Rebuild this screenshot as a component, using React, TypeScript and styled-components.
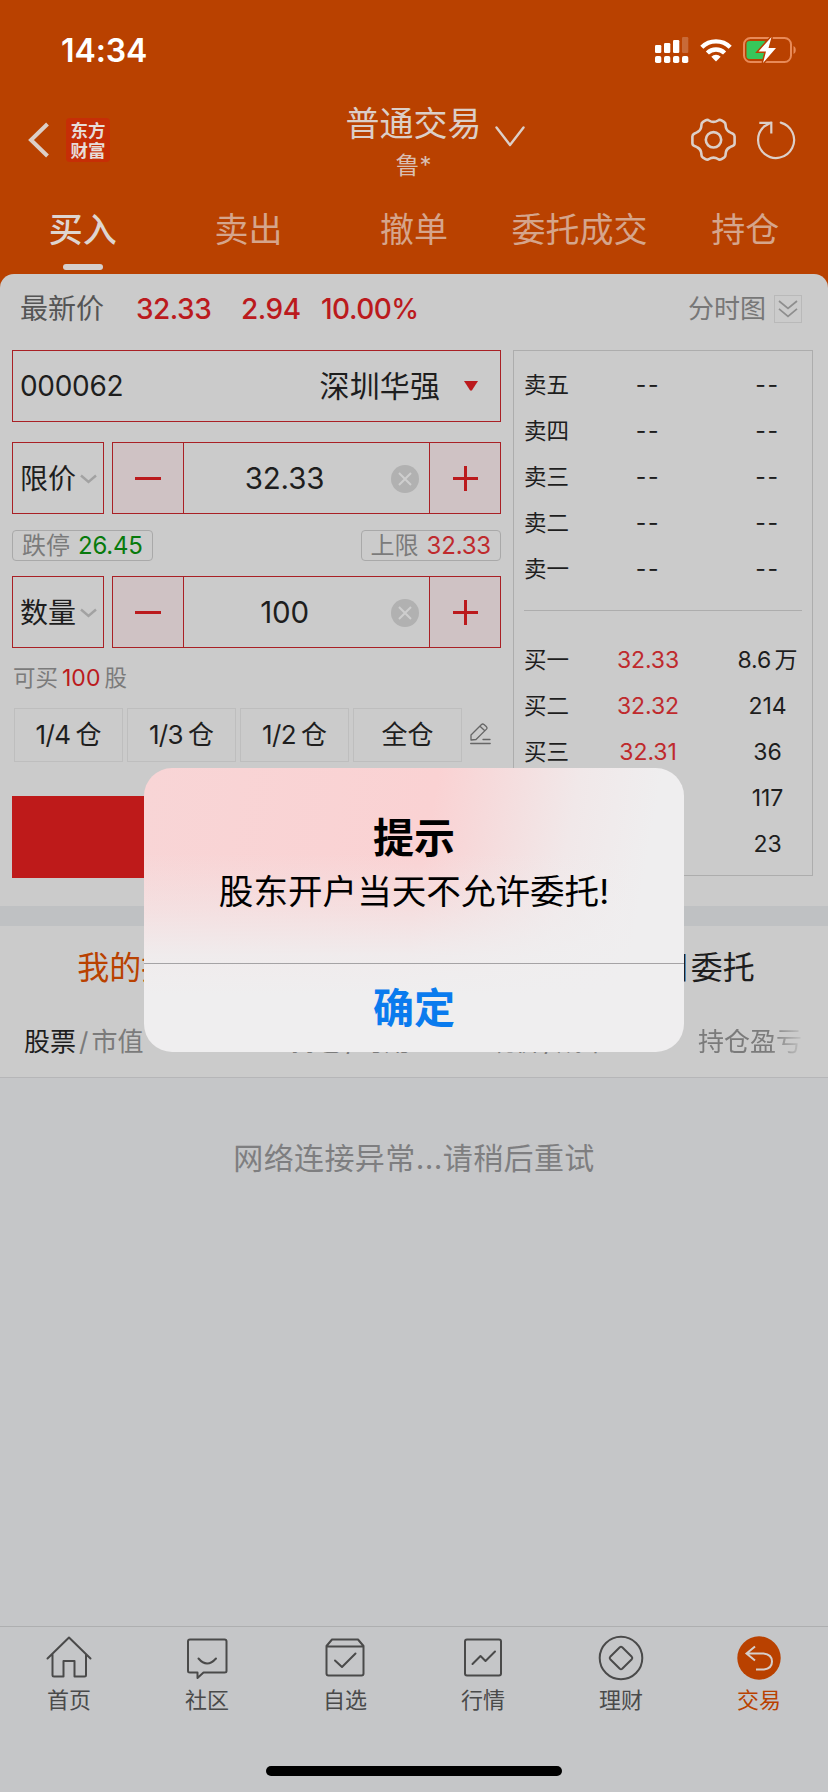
import React from "react";
import styled, { createGlobalStyle, css } from "styled-components";

const c = {
  brand: "#b94100",
  sheet: "#cbcbcb",
  page: "#c5c6c8",
  red: "#bb1a1d",
  redLine: "#a92025",
  ink: "#1e1e1e",
  mid: "#4a4a4a",
  gray: "#7b7b7b",
  line: "#adadad",
};

const Global = createGlobalStyle`
  * { box-sizing: border-box; }
  body {
    margin: 0;
    font-family: Inter, "Noto Sans CJK SC", sans-serif;
    color: ${c.ink};
    background: ${c.page};
  }
`;

const Screen = styled.div`
  position: relative;
  width: 828px;
  height: 1792px;
  display: flex;
  flex-direction: column;
  overflow: hidden;
  background: ${c.page};
  white-space: nowrap;
  line-height: 1;
`;

/* ---------- header ---------- */
const Header = styled.header`
  height: 290px;
  margin-bottom: -16px;
  flex: none;
  background: ${c.brand};
  color: #dccfc8;
`;
const StatusBar = styled.div`
  height: 98px;
  padding: 0 31px 0 61px;
  display: flex;
  align-items: center;
  justify-content: space-between;
`;
const Clock = styled.span`
  color: #fff;
  font-size: 32px;
  font-weight: 600;
  letter-spacing: -0.1px;
  padding-top: 3px;
`;
const StatusIcons = styled.div`
  display: flex;
  align-items: center;
  gap: 11px;
  padding-top: 2px;
`;
const NavBar = styled.div`
  height: 90px;
  padding: 0 32px 0 28px;
  display: grid;
  grid-template-columns: 317px 1fr auto;
  align-items: center;
`;
const NavLeft = styled.div`
  display: flex;
  align-items: center;
  gap: 16px;
  padding-bottom: 6px;
`;
const Brand = styled.div`
  width: 44px;
  height: 44px;
  display: grid;
  place-content: center;
  background: #c62e06;
  color: #e6dcd8;
  font-size: 17.5px;
  line-height: 20px;
  font-weight: 700;
  font-family: "Noto Sans CJK SC", sans-serif;
  border-radius: 4px;
`;
const TitleRow = styled.div`
  display: flex;
  align-items: flex-start;
  gap: 13px;
`;
const TitleText = styled.div`
  width: 137px;
  display: flex;
  flex-direction: column;
  align-items: center;
  font-size: 34px;
  line-height: 46px;
`;
const Account = styled.span`
  font-size: 24px;
  line-height: 38px;
  color: #d9bfb2;
`;
const ChevronHolder = styled.div`
  padding-top: 25px;
`;
const NavActions = styled.div`
  display: flex;
  align-items: center;
  gap: 19px;
  padding-bottom: 6px;
`;
const Tabs = styled.nav`
  display: grid;
  grid-template-columns: repeat(5, 1fr);
  height: 86px;
  padding-top: 18px;
`;
const Tab = styled.div<{ $on?: boolean }>`
  display: flex;
  flex-direction: column;
  align-items: center;
  font-size: 34px;
  line-height: 48px;
  font-weight: ${(p) => (p.$on ? 500 : 400)};
  color: ${(p) => (p.$on ? "#ded5d0" : "#d5a58c")};
  ${(p) =>
    p.$on &&
    css`
      &::after {
        content: "";
        width: 40px;
        height: 6px;
        margin-top: 10px;
        border-radius: 3px;
        background: #d6cfcc;
      }
    `}
`;

/* ---------- trade sheet ---------- */
const Sheet = styled.section`
  position: relative;
  flex: none;
  height: 632px;
  background: ${c.sheet};
  border-radius: 14px 14px 0 0;
`;
const QuoteRow = styled.div`
  height: 76px;
  padding: 0 26px 6px 20px;
  display: flex;
  align-items: center;
  font-size: 28px;
`;
const QuoteLabel = styled.span`
  width: 116px;
  color: #555;
`;
const QuoteValue = styled.span<{ $w: number }>`
  width: ${(p) => p.$w}px;
  color: ${c.red};
  font-weight: 500;
  letter-spacing: -0.5px;
`;
const ChartToggle = styled.div`
  margin-left: auto;
  display: flex;
  align-items: center;
  gap: 8px;
  font-size: 26px;
  color: #777;
`;
const ToggleBox = styled.div`
  width: 28px;
  height: 28px;
  display: grid;
  place-items: center;
  border: 1px solid #b9b9b9;
`;
const TradeGrid = styled.div`
  display: grid;
  grid-template-columns: 489px 300px;
  column-gap: 12px;
  padding-left: 12px;
`;
const Form = styled.div`
  display: flex;
  flex-direction: column;
`;
const StockBox = styled.div`
  height: 72px;
  margin-bottom: 20px;
  padding: 0 22px 0 7px;
  border: 1px solid ${c.redLine};
  display: flex;
  align-items: center;
  font-size: 28px;
  letter-spacing: -0.3px;
`;
const StockName = styled.span`
  margin-left: auto;
  margin-right: 24px;
  font-size: 30px;
  letter-spacing: 0.1px;
`;
const FieldRow = styled.div`
  display: flex;
  gap: 8px;
  height: 72px;
`;
const FieldKind = styled.div`
  width: 92px;
  padding-left: 7px;
  padding-top: 1px;
  border: 1px solid ${c.redLine};
  display: flex;
  align-items: center;
  gap: 4px;
  font-size: 28px;
`;
const Stepper = styled.div`
  width: 389px;
  border: 1px solid ${c.redLine};
  display: grid;
  grid-template-columns: 71px 1fr 71px;
`;
const StepButton = styled.div<{ $side: "left" | "right" }>`
  display: grid;
  place-items: center;
  background: #cfc2c4;
  border-${(p) => (p.$side === "left" ? "right" : "left")}: 1px solid ${c.redLine};
`;
const StepValue = styled.div`
  display: grid;
  grid-template-columns: 1fr 28px;
  align-items: center;
  padding: 1px 10px 0 0;
  column-gap: 6px;
  font-size: 29.5px;
  letter-spacing: -0.2px;
  text-align: center;
`;
const LimitRow = styled.div`
  height: 62px;
  display: flex;
  align-items: center;
  justify-content: space-between;
`;
const LimitTag = styled.div<{ $color: string }>`
  height: 31px;
  padding: 1px 9px 0;
  display: flex;
  align-items: center;
  gap: 8px;
  border: 1px solid #a9a9a9;
  border-radius: 4px;
  font-size: 24px;
  color: ${c.gray};
  b {
    font-weight: 400;
    letter-spacing: -0.2px;
    color: ${(p) => p.$color};
  }
`;
const Available = styled.div`
  height: 60px;
  display: flex;
  align-items: center;
  gap: 4px;
  padding-left: 1px;
  font-size: 22.5px;
  color: ${c.gray};
  b {
    font-weight: 400;
    color: ${c.red};
    font-size: 23px;
  }
`;
const QuickRow = styled.div`
  display: flex;
  align-items: center;
  gap: 4px;
  padding-left: 2px;
  height: 54px;
`;
const Quick = styled.div`
  width: 109px;
  height: 54px;
  display: flex;
  align-items: center;
  justify-content: center;
  gap: 5px;
  border: 1px solid #bebebe;
  font-size: 26px;
`;
const Fraction = styled.span`
  letter-spacing: -0.6px;
`;
const EditHolder = styled.div`
  padding-left: 4px;
  height: 24px;
`;
const BuyButton = styled.div`
  height: 82px;
  margin-top: 34px;
  background: #be1a1a;
`;
const Book = styled.div`
  height: 526px;
  border: 1px solid ${c.line};
  padding: 11px 10px 0;
`;
const BookRow = styled.div<{ $up?: boolean; $empty?: boolean }>`
  height: 46px;
  display: grid;
  grid-template-columns: 79px 90px 1fr;
  align-items: center;
  font-size: 23px;
  text-align: center;
  letter-spacing: ${(p) => (p.$empty ? "1.600px" : "-0.1px")};
  word-spacing: -3px;
  span:first-child {
    text-align: left;
    font-size: 22.5px;
    letter-spacing: 0;
  }
  span:nth-child(2) {
    color: ${(p) => (p.$up ? "#bf2a2d" : c.ink)};
  }
  span:last-child {
    padding-left: 31px;
    margin-right: -9px;
  }
`;
const BookDivider = styled.div`
  height: 1px;
  margin: 18px 0 26px;
  background: ${c.line};
`;

/* ---------- holdings ---------- */
const Band = styled.div`
  height: 20px;
  flex: none;
  background: #bfc1c3;
`;
const Holdings = styled.section`
  flex: none;
  height: 152px;
  background: ${c.sheet};
  border-bottom: 1px solid #b6b6b8;
`;
const HoldingTabs = styled.div`
  height: 84px;
  padding-left: 4px;
  display: grid;
  grid-template-columns: repeat(3, 1fr);
  align-items: center;
  text-align: center;
  font-size: 32px;
`;
const HoldingTab = styled.span<{ $on?: boolean }>`
  color: ${(p) => (p.$on ? c.brand : c.ink)};
`;
const Columns = styled.div`
  height: 62px;
  padding: 2px 24px 0;
  display: grid;
  grid-template-columns: 267px 198px 209px 1fr;
  align-items: center;
  font-size: 26px;
  color: ${c.gray};
  overflow: hidden;
  em {
    font-style: normal;
    color: ${c.ink};
  }
  i {
    font-style: normal;
    padding: 0 3px;
  }
`;
const FadeCell = styled.span`
  -webkit-mask-image: linear-gradient(90deg, #000 72px, transparent 108px);
  mask-image: linear-gradient(90deg, #000 72px, transparent 108px);
`;
const Empty = styled.div`
  flex: 1;
  padding-top: 65px;
  text-align: center;
  font-size: 30px;
  letter-spacing: 0.4px;
  line-height: 30px;
  color: #7e7e80;
`;

/* ---------- bottom bar ---------- */
const BottomBar = styled.footer`
  flex: none;
  height: 166px;
  border-top: 1px solid #aeafb0;
  display: flex;
  flex-direction: column;
  align-items: center;
`;
const BottomItems = styled.div`
  width: 828px;
  height: 139px;
  display: grid;
  grid-template-columns: repeat(6, 1fr);
`;
const BottomItem = styled.div<{ $on?: boolean }>`
  padding-top: 8px;
  display: flex;
  flex-direction: column;
  align-items: center;
  font-size: 22px;
  line-height: 30px;
  gap: 4px;
  color: ${(p) => (p.$on ? c.brand : c.mid)};
`;
const HomeIndicator = styled.div`
  width: 296px;
  height: 10px;
  border-radius: 5px;
  background: #000;
`;

/* ---------- alert ---------- */
const Alert = styled.div`
  position: absolute;
  left: 144px;
  top: 768px;
  width: 540px;
  height: 284px;
  border-radius: 28px;
  overflow: hidden;
  display: flex;
  flex-direction: column;
  color: #000;
  text-align: center;
  background: linear-gradient(180deg, rgba(239, 238, 239, 0) 30%, rgba(239, 238, 239, 0.45) 50%, rgba(239, 238, 239, 0.9) 66%, #efeeef 80%),
    linear-gradient(100deg, #f8d5d6 0%, #fad2d3 50%, #f6dadb 59%, #f1e8e9 74%, #efeeef 88%);
`;
const AlertBody = styled.div`
  flex: none;
  height: 195px;
  padding-top: 42px;
`;
const AlertTitle = styled.div`
  font-size: 41px;
  line-height: 57px;
  font-weight: 700;
`;
const AlertMessage = styled.div`
  font-size: 34.6px;
  line-height: 48px;
`;
const AlertAction = styled.div`
  flex: none;
  height: 89px;
  border-top: 1px solid #a5a3a5;
  font-size: 41px;
  line-height: 89px;
  font-weight: 700;
  color: #0a7bee;
`;

const stroke = { fill: "none", stroke: "currentColor", strokeLinecap: "round", strokeLinejoin: "round" } as const;

const Signal = () => (
  <svg width="34" height="27" viewBox="0 0 34 27" fill="#fff">
    <rect x="0" y="8" width="6.3" height="8" rx="1.2" />
    <rect x="9" y="6" width="6.3" height="10" rx="1.2" />
    <rect x="18" y="3" width="6.3" height="13" rx="1.2" />
    <rect x="27" y="0" width="6.3" height="16" rx="1.2" opacity=".22" />
    {[0, 9, 18, 27].map((x) => (
      <rect key={x} x={x} y="19" width="6.3" height="7" rx="1.8" />
    ))}
  </svg>
);
const Wifi = () => (
  <svg width="32" height="24" viewBox="0 0 32 24" fill="none" stroke="#fff" strokeWidth="4.4">
    <path d="M1.8 9.2a20.2 20.2 0 0 1 28.4 0" />
    <path d="M7.4 15a12.2 12.2 0 0 1 17.2 0" />
    <path d="M16 23.5l-4.7-4.7a6.6 6.6 0 0 1 9.4 0z" fill="#fff" stroke="none" />
  </svg>
);
const Battery = () => (
  <svg width="54" height="27" viewBox="0 0 54 27">
    <rect x="1" y="1" width="47" height="24" rx="6.5" fill="none" stroke="#e88a58" strokeWidth="2" />
    <path d="M50.5 9v8c3-1.3 3-6.7 0-8z" fill="#e88a58" />
    <rect x="3.5" y="4" width="20" height="18" rx="3" fill="#37c75a" />
    <path d="M28.500 0L15.500 14.500h7.500l-3 11.500 13-15h-7.500z" fill="#fff" stroke={c.brand} strokeWidth="3" paintOrder="stroke" />
  </svg>
);
const Back = () => (
  <svg width="22" height="36" viewBox="0 0 22 36" fill="none" stroke="#dccfc8" strokeWidth="4">
    <path d="M19.500 2L3 18l16.500 16" />
  </svg>
);
const TitleChevron = () => (
  <svg width="30" height="21" viewBox="0 0 30 21" {...stroke} strokeWidth="2.4">
    <path d="M1.500 1.500L15 19 28.500 1.500" />
  </svg>
);
const Gear = () => (
  <svg width="46" height="44" viewBox="0 0 46 44" {...stroke} strokeWidth="2.6">
    <path d="M14.500 2.400Q16.500 1.300 18 2.500Q22.500 5.300 27 2.500Q28.500 1.300 30.500 2.400L33 3.800Q34.800 5 34.600 7.500Q34.800 12 38.500 14Q40 15 41.500 15.500Q43.600 16.500 43.600 18.500V25.200Q43.600 27.200 41.500 28Q40 28.500 38.500 29.500Q34.800 31.500 34.600 36Q34.800 38.500 33 39.700L30.500 41.100Q28.500 42.200 27 41Q22.500 38.200 18 41Q16.500 42.200 14.500 41.100L12 39.700Q10.200 38.500 10.400 36Q10.200 31.500 6.500 29.500Q5 28.500 3.500 28Q1.400 27.200 1.400 25.200V18.500Q1.400 16.500 3.500 15.500Q5 15 6.500 14Q10.200 12 10.400 7.500Q10.200 5 12 3.800Z" />
    <circle cx="22.500" cy="21.800" r="7.700" />
  </svg>
);
const Reload = () => (
  <svg width="40" height="40" viewBox="0 0 40 40" fill="none" stroke="currentColor" strokeWidth="2.2">
    <path d="M24.800 2.600A18 18 0 1 1 8.500 6.200L15 2.600" strokeLinecap="round" />
    <path d="M3.300 2.800H15.300V13.500" />
  </svg>
);
const SmallChevron = () => (
  <svg width="17" height="10" viewBox="0 0 17 10" fill="none" stroke="#a2a2a2" strokeWidth="2.4">
    <path d="M1 1.500l7.500 6.500L16 1.500" />
  </svg>
);
const DoubleChevron = () => (
  <svg width="20" height="18" viewBox="0 0 20 18" fill="none" stroke="#8e8e8e" strokeWidth="1.7">
    <path d="M1 1l9 7.500L19 1M1 8.800l9 7.500 9-7.500" />
  </svg>
);
const Triangle = () => (
  <svg width="14" height="10" viewBox="0 0 14 10" fill={c.red}>
    <path d="M0 0h14L8 9.300q-1 .8-2 0z" />
  </svg>
);
const Minus = () => (
  <svg width="26" height="26" viewBox="0 0 26 26" stroke={c.red} strokeWidth="3">
    <path d="M0 13.500h26" />
  </svg>
);
const Plus = () => (
  <svg width="25" height="25" viewBox="0 0 25 25" stroke={c.red} strokeWidth="3">
    <path d="M0 12.500h25M12.500 0v25" />
  </svg>
);
const Clear = () => (
  <svg width="28" height="28" viewBox="0 0 28 28">
    <circle cx="14" cy="14" r="14" fill="#b1b1b1" />
    <path d="M8 8l12 12M20 8L8 20" stroke="#cecece" strokeWidth="2" />
  </svg>
);
const Pencil = () => (
  <svg width="21" height="22" viewBox="0 0 21 22" {...stroke} stroke="#666" strokeWidth="1.3">
    <path d="M1 17v-5L11.500 1.500q1.200-1 2.500 0l2.500 2.300q1 1.200 0 2.300L6 16.500zM10 3.200l4.800 4.600M13 16.500h7M0.700 20.500h19.500" />
  </svg>
);

const HomeIcon = () => (
  <svg width="46" height="46" viewBox="0 0 46 46" {...stroke} strokeWidth="2">
    <path d="M1.500 23.500L23 2.500l21.500 21M6.500 19.500V40q0 1.500 1.500 1.500H17.500V26H28.500V41.500H38.500q1.500 0 1.500-1.500V19.500" />
  </svg>
);
const ChatIcon = () => (
  <svg width="46" height="46" viewBox="0 0 46 46" {...stroke} strokeWidth="2">
    <path d="M6 4.500H40.500q2 0 2 2V36q0 1.500-2 1.500H19.500l-6 5.500v-5.500H6q-2 0-2-1.500V6.500q0-2 2-2zM14.500 23.500q8.500 10 17.500 0" />
  </svg>
);
const BoxIcon = () => (
  <svg width="46" height="46" viewBox="0 0 46 46" {...stroke} strokeWidth="2">
    <path d="M4.500 11l5.500-6.500H36l5.500 6.500V38.500q0 2-2 2H6.500q-2 0-2-2zM4.500 11.500H41.500M13 25.500l7 6.500L33.500 18.500" />
  </svg>
);
const ChartIcon = () => (
  <svg width="46" height="46" viewBox="0 0 46 46" {...stroke} strokeWidth="2">
    <rect x="5" y="4.500" width="36" height="36" rx="2" />
    <path d="M12.500 29l8-8 5 5L35 16.500" />
  </svg>
);
const CoinIcon = () => (
  <svg width="46" height="46" viewBox="0 0 46 46" {...stroke} strokeWidth="2">
    <circle cx="23" cy="23" r="21.300" />
    <path d="M21.800 12.200q1.200-1 2.400 0L33.800 21.800q1 1.200 0 2.400L24.200 33.800q-1.200 1-2.400 0L12.200 24.200q-1-1.200 0-2.400z" />
  </svg>
);
const TradeIcon = () => (
  <svg width="46" height="46" viewBox="0 0 46 46">
    <circle cx="23" cy="23" r="21.700" fill={c.brand} />
    <path d="M19 11.500L10.500 18.500 19 25.500M10.500 18.500H27.500q8.500 1 8.500 8 0 7-8 8H20" fill="none" stroke="#d6cfcc" strokeWidth="2" />
  </svg>
);

const topTabs = ["买入", "卖出", "撤单", "委托成交", "持仓"];
const asks = ["卖五", "卖四", "卖三", "卖二", "卖一"];
const bids = [
  ["买一", "32.33", "8.6 万"],
  ["买二", "32.32", "214"],
  ["买三", "32.31", "36"],
  ["买四", "", "117"],
  ["买五", "", "23"],
];
const bottom = [
  { label: "首页", Icon: HomeIcon },
  { label: "社区", Icon: ChatIcon },
  { label: "自选", Icon: BoxIcon },
  { label: "行情", Icon: ChartIcon },
  { label: "理财", Icon: CoinIcon },
  { label: "交易", Icon: TradeIcon },
];

const Field = ({ kind, value }: { kind: string; value: string }) => (
  <FieldRow>
    <FieldKind>
      {kind}
      <SmallChevron />
    </FieldKind>
    <Stepper>
      <StepButton $side="left"><Minus /></StepButton>
      <StepValue>
        {value}
        <Clear />
      </StepValue>
      <StepButton $side="right"><Plus /></StepButton>
    </Stepper>
  </FieldRow>
);

export default function App() {
  return (
    <Screen>
      <Global />
      <Header>
        <StatusBar>
          <Clock>14:34</Clock>
          <StatusIcons>
            <Signal />
            <Wifi />
            <Battery />
          </StatusIcons>
        </StatusBar>
        <NavBar>
          <NavLeft>
            <Back />
            <Brand>
              <span>东方</span>
              <span>财富</span>
            </Brand>
          </NavLeft>
          <TitleRow>
            <TitleText>
              <span>普通交易</span>
              <Account>鲁*</Account>
            </TitleText>
            <ChevronHolder><TitleChevron /></ChevronHolder>
          </TitleRow>
          <NavActions>
            <Gear />
            <Reload />
          </NavActions>
        </NavBar>
        <Tabs>
          {topTabs.map((t, i) => (
            <Tab key={t} $on={i === 0}>{t}</Tab>
          ))}
        </Tabs>
      </Header>

      <Sheet>
        <QuoteRow>
          <QuoteLabel>最新价</QuoteLabel>
          <QuoteValue $w={105}>32.33</QuoteValue>
          <QuoteValue $w={80}>2.94</QuoteValue>
          <QuoteValue $w={100}>10.00%</QuoteValue>
          <ChartToggle>
            分时图
            <ToggleBox><DoubleChevron /></ToggleBox>
          </ChartToggle>
        </QuoteRow>
        <TradeGrid>
          <Form>
            <StockBox>
              000062
              <StockName>深圳华强</StockName>
              <Triangle />
            </StockBox>
            <Field kind="限价" value="32.33" />
            <LimitRow>
              <LimitTag $color="#087a0c">跌停<b>26.45</b></LimitTag>
              <LimitTag $color="#bf2a2d">上限<b>32.33</b></LimitTag>
            </LimitRow>
            <Field kind="数量" value="100" />
            <Available>可买<b>100</b>股</Available>
            <QuickRow>
              {["1/4", "1/3", "1/2"].map((q) => (
                <Quick key={q}><Fraction>{q}</Fraction><span>仓</span></Quick>
              ))}
              <Quick>全仓</Quick>
              <EditHolder><Pencil /></EditHolder>
            </QuickRow>
            <BuyButton />
          </Form>
          <Book>
            {asks.map((a) => (
              <BookRow key={a} $empty><span>{a}</span><span>--</span><span>--</span></BookRow>
            ))}
            <BookDivider />
            {bids.map(([label, price, vol]) => (
              <BookRow key={label} $up><span>{label}</span><span>{price}</span><span>{vol}</span></BookRow>
            ))}
          </Book>
        </TradeGrid>
      </Sheet>

      <Band />

      <Holdings>
        <HoldingTabs>
          <HoldingTab $on>我的持仓</HoldingTab>
          <span />
          <HoldingTab>当日委托</HoldingTab>
        </HoldingTabs>
        <Columns>
          <span><em>股票</em><i>/</i>市值</span>
          <span>持仓<i>/</i>可用</span>
          <span>现价<i>/</i>成本</span>
          <FadeCell>持仓盈亏</FadeCell>
        </Columns>
      </Holdings>

      <Empty>网络连接异常...请稍后重试</Empty>

      <BottomBar>
        <BottomItems>
          {bottom.map(({ label, Icon }, i) => (
            <BottomItem key={label} $on={i === 5}>
              <Icon />
              {label}
            </BottomItem>
          ))}
        </BottomItems>
        <HomeIndicator />
      </BottomBar>

      <Alert>
        <AlertBody>
          <AlertTitle>提示</AlertTitle>
          <AlertMessage>股东开户当天不允许委托!</AlertMessage>
        </AlertBody>
        <AlertAction>确定</AlertAction>
      </Alert>
    </Screen>
  );
}
